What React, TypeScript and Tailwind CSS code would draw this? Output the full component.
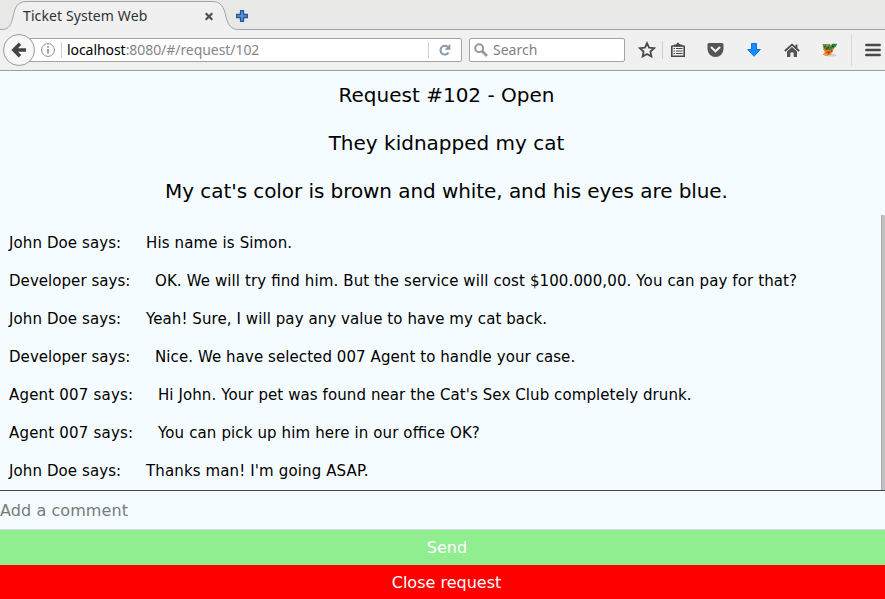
import React from "react";

type Comment = { author: string; text: string; nameClass: string; textClass: string };

const comments: Comment[] = [
  { author: "John Doe", text: "His name is Simon.", nameClass: "w-[112px] tracking-[0.1px]", textClass: "tracking-[0.13px]" },
  { author: "Developer", text: "OK. We will try find him. But the service will cost $100.000,00. You can pay for that?", nameClass: "w-[121px] tracking-[0.05px]", textClass: "tracking-[0.112px]" },
  { author: "John Doe", text: "Yeah! Sure, I will pay any value to have my cat back.", nameClass: "w-[112px] tracking-[0.1px]", textClass: "tracking-[0.08px]" },
  { author: "Developer", text: "Nice. We have selected 007 Agent to handle your case.", nameClass: "w-[121px] tracking-[0.05px]", textClass: "tracking-[0.08px]" },
  { author: "Agent 007", text: "Hi John. Your pet was found near the Cat's Sex Club completely drunk.", nameClass: "w-[124px] tracking-[0.2px]", textClass: "tracking-[0.09px]" },
  { author: "Agent 007", text: "You can pick up him here in our office OK?", nameClass: "w-[124px] tracking-[0.2px]", textClass: "tracking-[0.13px]" },
  { author: "John Doe", text: "Thanks man! I'm going ASAP.", nameClass: "w-[112px] tracking-[0.1px]", textClass: "tracking-[0.13px]" },
];

function TabStrip() {
  return (
    <div className="relative flex h-[30px] shrink-0 items-center bg-[#e8e8e6]">
      <svg className="absolute inset-0" width="885" height="30" viewBox="0 0 885 30">
        <path d="M0 29.5H2C9 29.5 11 25 13 17C15 7 17 1.5 27 1.5H212C221 1.5 224 7 226 17C228 25 231 29.5 239 29.5V30H0Z" fill="#f0f0f0" />
        <path d="M0 29.5H2C9 29.5 11 25 13 17C15 7 17 1.5 27 1.5H212C221 1.5 224 7 226 17C228 25 231 29.5 239 29.5H885" fill="none" stroke="#a0a4a6" />
      </svg>
      <span className="relative ml-[23px] mt-[2px] w-[181px] whitespace-nowrap text-[14px] leading-5 tracking-[0.1px] text-[#2e3436]">Ticket System Web</span>
      <svg className="relative mt-[2px]" width="10" height="9" viewBox="0 0 10 9">
        <path d="M1.7 1.2L8.3 7.8M8.3 1.2L1.7 7.8" stroke="#4c5052" strokeWidth="2.2" />
      </svg>
      <svg className="relative ml-[22px] mt-[2px]" width="12" height="12" viewBox="0 0 12 12">
        <path d="M4.5 .5H7.5V4.5H11.5V7.5H7.5V11.5H4.5V7.5H.5V4.5H4.5Z" fill="#5f95d8" stroke="#24559d" strokeWidth="1.3" strokeLinejoin="round" />
      </svg>
    </div>
  );
}

function Toolbar() {
  return (
    <div className="flex h-[41px] shrink-0 items-center border-b border-[#9d9f9c] bg-[#f0f0f0]">
      <svg className="relative z-10 ml-[2px]" width="34" height="34" viewBox="0 0 34 34">
        <circle cx="17" cy="17" r="15.5" fill="#f7f7f7" stroke="#9b9b9b" />
        <path d="M24 17H12M18 10.8L11.8 17L18 23.2" fill="none" stroke="#444" strokeWidth="3.5" />
      </svg>
      <div className="-ml-[8px] flex h-6 w-[434px] items-center rounded-r-[2px] border border-[#a3a3a0] bg-white text-[14px]">
        <svg className="ml-[12px]" width="14" height="14" viewBox="0 0 14 14">
          <circle cx="7" cy="7" r="6.4" fill="none" stroke="#8b8b8b" />
          <path d="M7 6V10.5M7 3.3V4.8" stroke="#808080" strokeWidth="1.5" />
        </svg>
        <i className="ml-[6px] h-4 w-px bg-[#d0d0d0]" />
        <span className="ml-[5px] w-[361px] whitespace-nowrap leading-5 tracking-[-0.06px] text-[#858585]"><span className="text-black">localhost</span>:8080/#/request/102</span>
        <i className="h-4 w-px bg-[#cfcfcf]" />
        <svg className="ml-[9px]" width="14" height="14" viewBox="0 0 14 14">
          <path d="M10.5 9.6A4.4 4.4 0 1 1 9.6 3.7" fill="none" stroke="#8797a5" strokeWidth="2" />
          <path d="M12.4 .8V6.8H6.6Z" fill="#8797a5" />
        </svg>
      </div>
      <div className="ml-[7px] flex h-6 w-[156px] items-center rounded-[2px] border border-[#a3a3a0] bg-white text-[14px] text-[#808080]">
        <svg className="ml-[4px]" width="14" height="14" viewBox="0 0 14 14">
          <circle cx="5.2" cy="5.2" r="3.9" fill="none" stroke="#979797" strokeWidth="2" />
          <path d="M8 8L13 13" stroke="#979797" strokeWidth="2.6" />
        </svg>
        <span className="ml-[5px] leading-5">Search</span>
      </div>
      <svg className="ml-[13px]" width="18" height="18" viewBox="0 0 18 18">
        <path d="M9 2.1L11.1 6.6L16.1 7.2L12.4 10.6L13.4 15.5L9 13L4.6 15.5L5.6 10.6L1.9 7.2L6.9 6.6Z" fill="none" stroke="#4a4a4a" strokeWidth="1.8" />
      </svg>
      <i className="ml-[6px] h-[18px] w-px bg-[#cfcfcf]" />
      <svg className="ml-[8px]" width="15" height="16" viewBox="0 0 15 16">
        <path d="M1.3 4H12.7Q13.2 4 13.2 4.5V14.2H.8V4.5Q.8 4 1.3 4Z" fill="#f0f0f0" stroke="#484848" strokeWidth="1.6" />
        <path d="M3 4.5V2.5H5L7 .3L9 2.5H11V4.5Z" fill="#484848" />
        <path d="M2.5 6.5H4M5 6.5H11.5M2.5 9H4M5 9H11.5M2.5 11.5H4M5 11.5H11.5" stroke="#484848" strokeWidth="1.2" />
      </svg>
      <svg className="ml-[21px]" width="17" height="16" viewBox="0 0 17 16">
        <path d="M2 1H15Q16.5 1 16.5 2.5V7A8 8 0 0 1 .5 7V2.5Q.5 1 2 1Z" fill="#555" />
        <path d="M4.5 5.5L8.5 9.2L12.5 5.5" fill="none" stroke="#f2f2f2" strokeWidth="2.1" strokeLinecap="round" />
      </svg>
      <svg className="ml-[23px]" width="14" height="16" viewBox="0 0 14 16">
        <path d="M4.5 1.5H9.5V7.5H13.3L7 14.3L.7 7.5H4.5Z" fill="#168cff" stroke="#0874e6" />
      </svg>
      <svg className="ml-[23px]" width="16" height="15" viewBox="0 0 16 15">
        <path d="M.8 8L8 1.6L15.2 8M12.5 1.5V5" fill="none" stroke="#4b4b4b" strokeWidth="1.8" />
        <path d="M3 8.3L8 4L13 8.3V14H9.6V9.5H6.4V14H3Z" fill="#555" />
      </svg>
      <svg className="ml-[21px]" width="17" height="16" viewBox="0 0 17 16">
        <ellipse cx="10" cy="13.3" rx="5.5" ry="1.2" fill="#cfcfcf" />
        <path d="M1.5 2H9L10 4L5 9L3 8Z" fill="#3e8d36" />
        <path d="M2 2.5L8 2L9 3L4 5.5Z" fill="#b58750" />
        <path d="M2 7L6 6L10 4L13 6L11.5 10L9 13L4.5 14L1.8 12.5L4 10Z" fill="#f47721" />
        <path d="M5 8L10 4L11 1.8H16.3L14.5 5L10 7.5L7 8Z" fill="#258b32" />
        <path d="M3 5L5 3.5M4.5 7.5L8 5M11 3.5L12.5 5" fill="none" stroke="#254e22" strokeWidth="1.2" />
        <path d="M5.5 10H8.5L7 12M10 8L11 10" fill="none" stroke="#9b3e18" strokeWidth="1.1" />
        <path d="M3 12L6 13" fill="none" stroke="#ffb03a" strokeWidth="1.3" />
      </svg>
      <i className="ml-[13px] h-8 w-px bg-[#d8d8d8]" />
      <svg className="ml-[13px]" width="16" height="14" viewBox="0 0 16 14">
        <path d="M1.4 2H14.6M1.4 7H14.6M1.4 12H14.6" stroke="#484848" strokeWidth="2.7" strokeLinecap="round" />
      </svg>
    </div>
  );
}

export default function App() {
  return (
    <div className="flex h-[599px] w-[885px] flex-col overflow-hidden bg-[#f5fcff] font-['DejaVu_Sans',sans-serif] text-black">
      <header className="font-['Noto_Sans',sans-serif]">
        <TabStrip />
        <Toolbar />
      </header>
      <div className="flex h-[144px] shrink-0 flex-col pl-[8px] text-center text-[20px] leading-[48px]">
        <h1>Request #102 - Open</h1>
        <h2>They kidnapped my cat</h2>
        <p className="tracking-[-0.07px]">My cat's color is brown and white, and his eyes are blue.</p>
      </div>
      <main className="flex h-[275px] shrink-0">
        <ul className="flex-1 pl-[9px] pt-[9px] text-[15px] leading-[38px] [font-feature-settings:'liga'_1]">
          {comments.map((comment, index) => (
            <li key={index} className="flex h-[38px] gap-[25px] whitespace-nowrap">
              <span className={comment.nameClass}>{comment.author} says:</span>
              <span className={comment.textClass}>{comment.text}</span>
            </li>
          ))}
        </ul>
        <div className="w-1 border-l border-[#a9a9a9] bg-[#c1c1c1]" />
      </main>
      <input
        placeholder="Add a comment"
        className="h-10 w-full shrink-0 border-y border-t-[#474a4b] border-b-[#d3dadd] bg-transparent p-0 text-[16px] tracking-[0.08px] outline-none placeholder:text-[#777b7d]"
      />
      <button className="h-[35px] shrink-0 bg-[#90ee90] pl-[9px] text-[16px] leading-[35px] text-white">Send</button>
      <button className="h-[34px] shrink-0 bg-[#ff0000] pl-[8px] pt-px text-[16px] leading-[34px] text-white">Close request</button>
    </div>
  );
}
